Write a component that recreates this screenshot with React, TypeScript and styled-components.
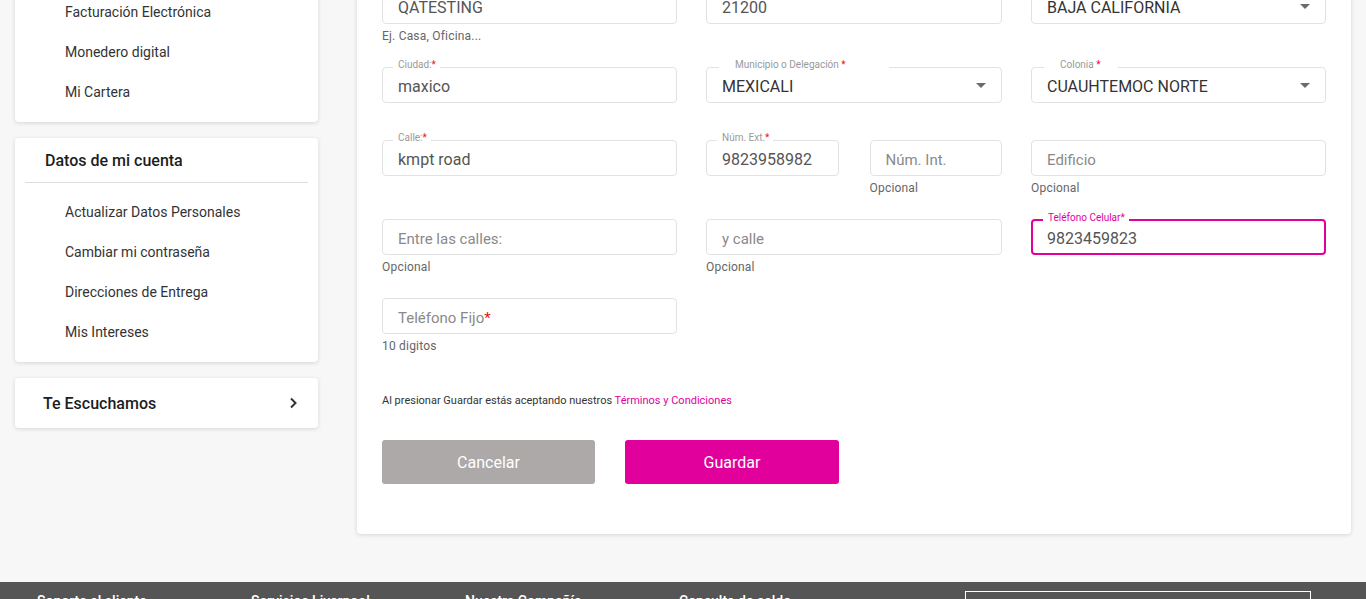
import styled, { createGlobalStyle, css } from 'styled-components';

const GlobalStyle = createGlobalStyle`
  html, body {
    margin: 0;
    padding: 0;
    background: #f7f7f7;
    font-family: Roboto, 'Liberation Sans', Arial, sans-serif;
    overflow: hidden;
  }
  * { box-sizing: border-box; }
`;

const Page = styled.div`
  display: flex;
  flex-direction: column;
`;

/* the page is shown scrolled down a little, so the top sits above the fold */
const Content = styled.div`
  display: flex;
  align-items: flex-start;
  gap: 39px;
  padding: 0 15px;
  margin-top: -60px;
  margin-bottom: 48px;
`;

const Sidebar = styled.aside`
  width: 303px;
  flex-shrink: 0;
  display: flex;
  flex-direction: column;
  gap: 16px;
`;

const SideCard = styled.div<{ $pad?: string }>`
  background: #fff;
  border-radius: 4px;
  box-shadow: 0 1px 4px rgba(0, 0, 0, 0.14);
  padding: ${(p) => p.$pad || '12px 0 10px'};
`;

const SideTitle = styled.div`
  padding: 13px 30px 11px;
  font-size: 16px;
  line-height: 20px;
  font-weight: 500;
  color: #1d1d1d;
`;

const Divider = styled.hr`
  margin: 0 10px 9px;
  border: 0;
  border-top: 1px solid #dcdcdc;
`;

const SideItem = styled.div`
  height: 40px;
  display: flex;
  align-items: center;
  padding-left: 50px;
  font-size: 14px;
  color: #333;
`;

const SideLink = styled.div`
  height: 50px;
  display: flex;
  align-items: center;
  justify-content: space-between;
  padding: 0 20px 0 28px;
  font-size: 16px;
  font-weight: 500;
  color: #1d1d1d;
`;

const MainCard = styled.main`
  flex: 1;
  background: #fff;
  border-radius: 4px;
  box-shadow: 0 1px 4px rgba(0, 0, 0, 0.14);
  padding: 48px 25px 50px;
`;

const FieldRow = styled.div<{ $h: number }>`
  display: grid;
  grid-template-columns: 295px 1fr 295px;
  column-gap: 29px;
  height: ${(p) => p.$h}px;
`;

const SplitCell = styled.div`
  display: grid;
  grid-template-columns: 1fr 1fr;
  column-gap: 31px;
`;

const Cell = styled.div`
  display: flex;
  flex-direction: column;
`;

const Box = styled.div<{ $focus?: boolean }>`
  position: relative;
  height: 36px;
  border-radius: 4px;
  display: flex;
  align-items: center;
  padding: 3px 15px 0;
  ${(p) =>
    p.$focus
      ? css`
          border: 2px solid #e1009c;
          padding: 3px 14px 0;
        `
      : css`
          border: 1px solid #e2e2e2;
        `}
`;

const FloatLabel = styled.span<{ $focus?: boolean; $left: number; $right: number }>`
  position: absolute;
  top: -9px;
  left: ${(p) => p.$left}px;
  padding: 0 ${(p) => p.$right}px 0 ${(p) => (p.$left === 10 ? 5 : 16)}px;
  background: #fff;
  font-size: 10px;
  line-height: 12px;
  color: ${(p) => (p.$focus ? '#e1009c' : '#9a9a9a')};
`;

const Req = styled.span`
  color: #f01010;
`;

const Value = styled.span<{ $upper?: boolean }>`
  font-size: 16px;
  color: ${(p) => (p.$upper ? '#333' : '#555')};
  flex: 1;
  white-space: nowrap;
`;

const Placeholder = styled.span`
  font-size: 15px;
  color: #8a8a8a;
`;

const Arrow = styled.span`
  width: 0;
  height: 0;
  margin-top: -3px;
  border-left: 5px solid transparent;
  border-right: 5px solid transparent;
  border-top: 5px solid #6b6b6b;
`;

const Helper = styled.div`
  margin-top: 5px;
  font-size: 12px;
  line-height: 14px;
  color: #666;
  letter-spacing: 0.2px;
`;

const Terms = styled.p`
  margin: 17px 0 0;
  font-size: 11px;
  line-height: 14px;
  color: #333;
`;

const TermsLink = styled.span`
  color: #e1009c;
`;

const Buttons = styled.div`
  display: flex;
  gap: 30px;
  margin-top: 32px;
`;

const Button = styled.button<{ $primary?: boolean }>`
  width: ${(p) => (p.$primary ? 214 : 213)}px;
  height: 44px;
  border: 0;
  border-radius: 3px;
  font-family: inherit;
  font-size: 16px;
  color: #fff;
  background: ${(p) => (p.$primary ? '#e1009c' : '#aca9a8')};
`;

const Footer = styled.footer`
  background: #555;
  height: 60px;
  display: flex;
  align-items: flex-start;
  padding: 9px 0 0 37px;
`;

const FooterCol = styled.div`
  width: 214px;
  font-size: 14px;
  line-height: 16px;
  font-weight: 500;
  color: #fff;
  padding-top: 2px;
`;

const FooterBox = styled.div`
  margin-left: 72px;
  width: 346px;
  height: 40px;
  border: 1px solid #fff;
`;

type FieldProps = {
  label?: string;
  value?: string;
  placeholder?: string;
  helper?: string;
  select?: boolean;
  focus?: boolean;
  req?: boolean;
  labelRight?: number;
};

function Field({ label, value, placeholder, helper, select, focus, req, labelRight }: FieldProps) {
  return (
    <Cell>
      <Box $focus={focus}>
        {label && (
          <FloatLabel $focus={focus} $left={select ? 12 : 10} $right={labelRight ?? 4}>
            {label}
            {!focus && <Req>*</Req>}
            {focus && '*'}
          </FloatLabel>
        )}
        {value && <Value $upper={select}>{value}</Value>}
        {placeholder && (
          <Placeholder>
            {placeholder}
            {req && <Req>*</Req>}
          </Placeholder>
        )}
        {select && <Arrow />}
      </Box>
      {helper && <Helper>{helper}</Helper>}
    </Cell>
  );
}

const Chevron = () => (
  <svg width="10" height="12" viewBox="0 0 10 12">
    <path d="M3 1.5 L7.5 6 L3 10.5" fill="none" stroke="#333" strokeWidth="2" />
  </svg>
);

export default function App() {
  return (
    <Page>
      <GlobalStyle />
      <Content>
        <Sidebar>
          <SideCard>
            <SideItem>Mis Pedidos</SideItem>
            <SideItem>Facturación Electrónica</SideItem>
            <SideItem>Monedero digital</SideItem>
            <SideItem>Mi Cartera</SideItem>
          </SideCard>
          <SideCard $pad="0 0 10px">
            <SideTitle>Datos de mi cuenta</SideTitle>
            <Divider />
            <SideItem>Actualizar Datos Personales</SideItem>
            <SideItem>Cambiar mi contraseña</SideItem>
            <SideItem>Direcciones de Entrega</SideItem>
            <SideItem>Mis Intereses</SideItem>
          </SideCard>
          <SideCard $pad="0">
            <SideLink>
              Te Escuchamos
              <Chevron />
            </SideLink>
          </SideCard>
        </Sidebar>

        <MainCard>
          <FieldRow $h={79}>
            <Field value="QATESTING" helper="Ej. Casa, Oficina..." />
            <Field value="21200" />
            <Field value="BAJA CALIFORNIA" select />
          </FieldRow>
          <FieldRow $h={73}>
            <Field label="Ciudad:" value="maxico" />
            <Field label="Municipio o Delegación " value="MEXICALI" select labelRight={43} />
            <Field label="Colonia " value="CUAUHTEMOC NORTE" select labelRight={17} />
          </FieldRow>
          <FieldRow $h={79}>
            <Field label="Calle:" value="kmpt road" />
            <SplitCell>
              <Field label="Núm. Ext." value="9823958982" />
              <Field placeholder="Núm. Int." helper="Opcional" />
            </SplitCell>
            <Field placeholder="Edificio" helper="Opcional" />
          </FieldRow>
          <FieldRow $h={79}>
            <Field placeholder="Entre las calles:" helper="Opcional" />
            <Field placeholder="y calle" helper="Opcional" />
            <Field label="Teléfono Celular" value="9823459823" focus />
          </FieldRow>
          <FieldRow $h={79}>
            <Field placeholder="Teléfono Fijo" req helper="10 digitos" />
          </FieldRow>
          <Terms>
            Al presionar Guardar estás aceptando nuestros <TermsLink>Términos y Condiciones</TermsLink>
          </Terms>
          <Buttons>
            <Button>Cancelar</Button>
            <Button $primary>Guardar</Button>
          </Buttons>
        </MainCard>
      </Content>

      <Footer>
        <FooterCol>Soporte al cliente</FooterCol>
        <FooterCol>Servicios Liverpool</FooterCol>
        <FooterCol>Nuestra Compañía</FooterCol>
        <FooterCol>Consulta de saldo</FooterCol>
        <FooterBox />
      </Footer>
    </Page>
  );
}
